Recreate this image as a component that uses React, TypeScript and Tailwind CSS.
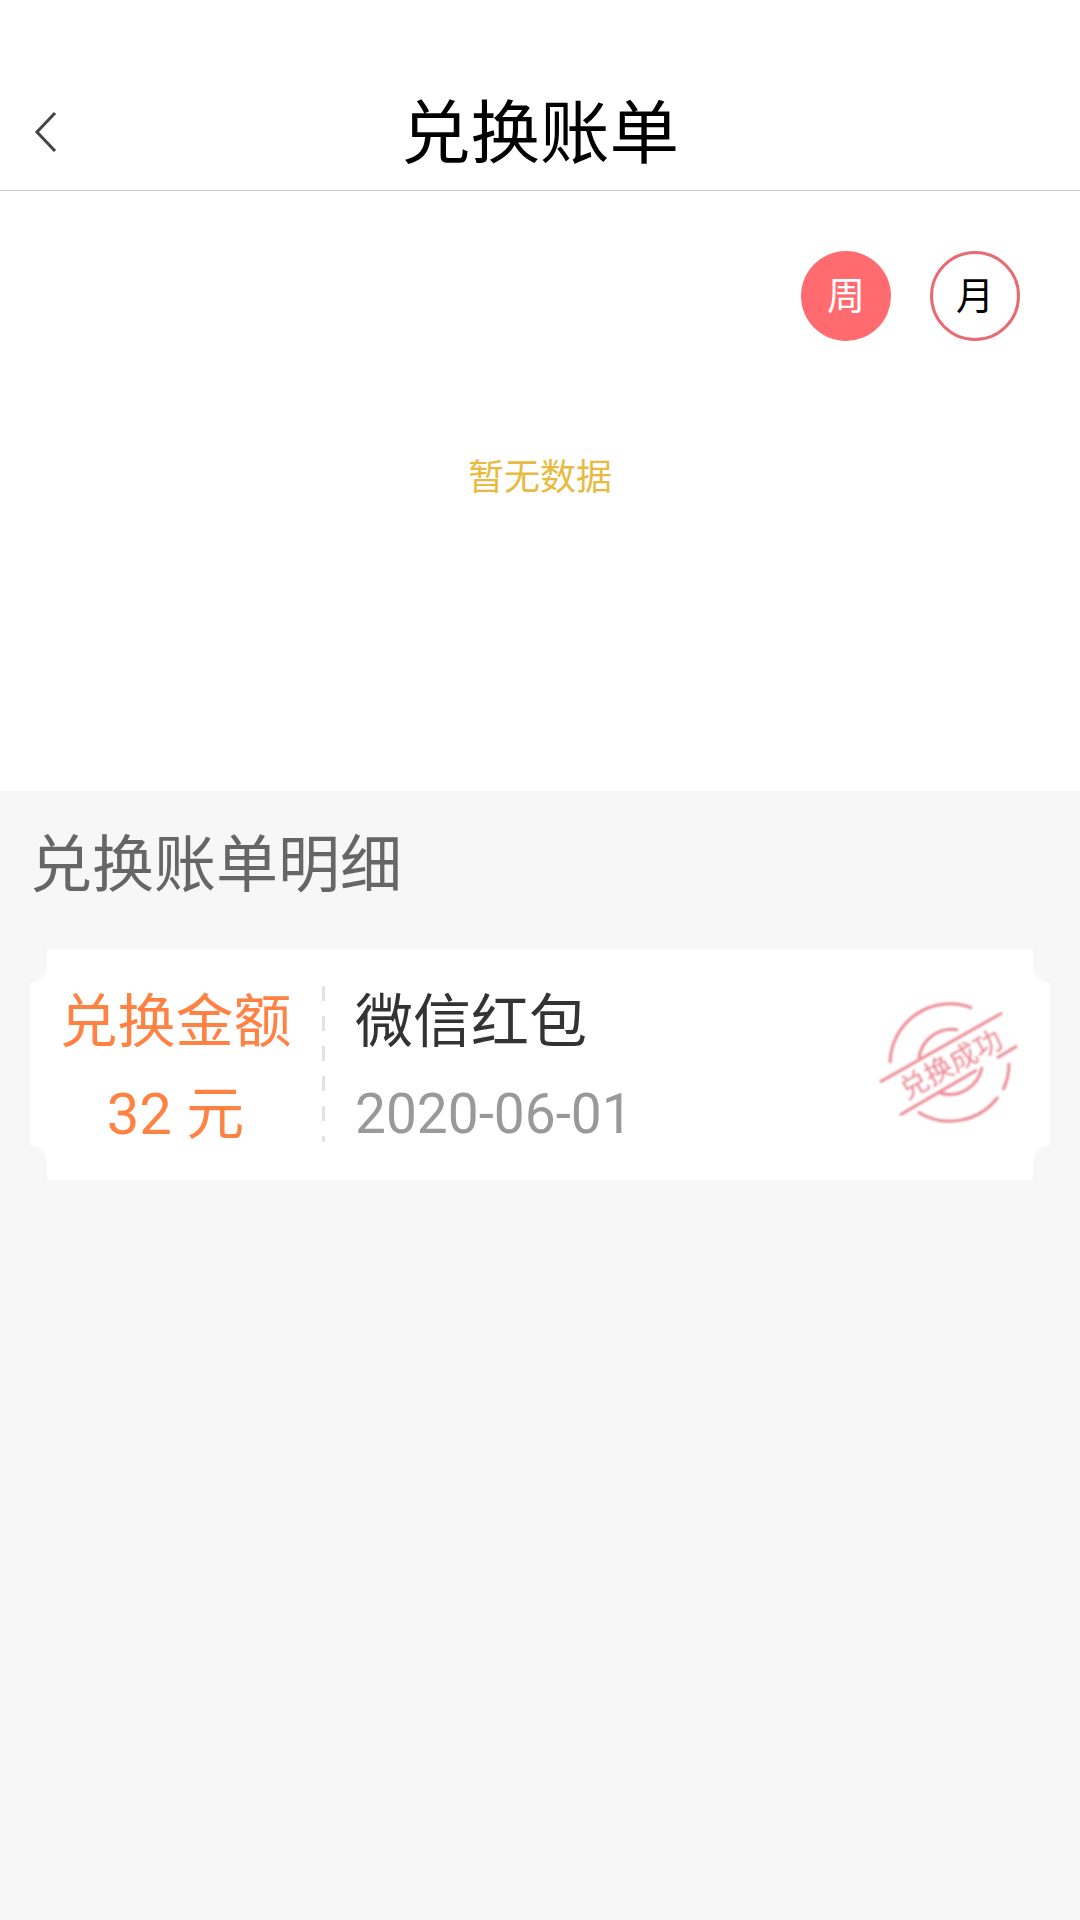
const font = 'font-["Roboto","Noto_Sans_CJK_SC",sans-serif]';

function Stamp() {
  return (
    <svg width="150" height="130" viewBox="0 0 150 130" className="absolute left-[845px] top-[50px] blur-[0.8px]" fill="none" stroke="#ec8a94" strokeWidth="3">
      <path d="M15 64 A60 60 0 0 1 97 9" />
      <path d="M134 64 A60 60 0 0 1 128 91" />
      <path d="M123 98 A60 60 0 0 1 43 113" />
      <path d="M44 59 A33 33 0 0 1 83 31" />
      <path d="M65 94 A33 33 0 0 0 107 68" />
      <path d="M5 83 L127 14" />
      <path d="M25 116 L102 71" />
      <path d="M122 59 L142 47" />
      <text x="76" y="75" textAnchor="middle" fontSize="28" fill="#ec8a94" stroke="none" transform="rotate(-29 76 65)" fontFamily="Noto Sans CJK SC, sans-serif">兑换成功</text>
    </svg>
  );
}

function Notch({ className }: { className: string }) {
  return <div className={`absolute w-[17px] h-[34px] bg-[#f7f7f7] ${className}`} />;
}

export default function App() {
  return (
    <div className={`w-[1080px] h-[1920px] flex flex-col bg-[#f7f7f7] ${font}`}>
      <header className="relative h-[191px] bg-white border-b border-[#cccccc] flex justify-center pt-[90px]">
        <svg width="24" height="40" viewBox="0 0 24 40" className="absolute left-[34px] top-[112px]" fill="none" stroke="#444444" strokeWidth="3">
          <path d="M21 1 L3 20 L21 39" />
        </svg>
        <h1 className="text-[69.5px] leading-[90px] text-black">兑换账单</h1>
      </header>

      <section className="relative h-[600px] bg-white">
        <div className="flex justify-end gap-[39px] pt-[60px] pr-[60px]">
          <div className="w-[90px] h-[90px] rounded-full bg-[#ff6b6e] text-white text-[38px] flex items-center justify-center">周</div>
          <div className="w-[90px] h-[90px] rounded-full border-[3px] border-[#ea6a72] text-black text-[38px] flex items-center justify-center">月</div>
        </div>
        <p className="mt-[112px] text-center text-[36px] leading-[50px] text-[#e8bb40]">暂无数据</p>
      </section>

      <h2 className="pl-[30px] pt-[31px] text-[62px] leading-[88px] text-[#666666]">兑换账单明细</h2>

      <div className="relative mx-[30px] mt-[39px] h-[231px] bg-white flex items-center">
        <Notch className="left-0 top-0 rounded-br-[17px]" />
        <Notch className="right-0 top-0 rounded-bl-[17px]" />
        <Notch className="left-0 bottom-0 rounded-tr-[17px]" />
        <Notch className="right-0 bottom-0 rounded-tl-[17px]" />

        <div className="w-[292px] flex flex-col items-center pt-[6px] text-[#ff8243] text-[58px] leading-[92px] pr-[1px]">
          <span>兑换金额</span>
          <span>32 元</span>
        </div>
        <div className="h-[156px] w-[3px] -mt-[1px] bg-[repeating-linear-gradient(to_bottom,#e2e2e2_0,#e2e2e2_15px,transparent_15px,transparent_30px)]" />
        <div className="pl-[30px] flex flex-col pt-[6px]">
          <span className="text-[58px] leading-[92px] text-[#333333]">微信红包</span>
          <span className="text-[55px] leading-[92px] text-[#999999]">2020-06-01</span>
        </div>
        <Stamp />
      </div>
    </div>
  );
}
